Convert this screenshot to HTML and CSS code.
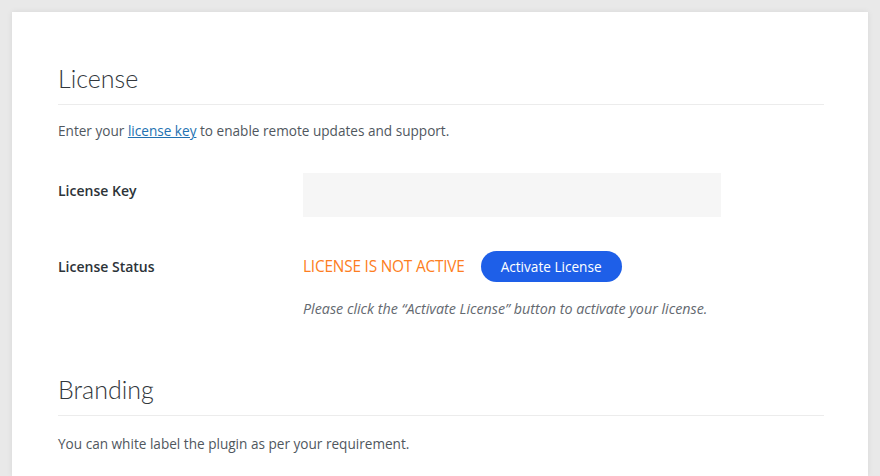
FILE: index.html
```html
<!DOCTYPE html>
<html>
<head>
<meta charset="utf-8">
<link rel="stylesheet" href="styles.css">
</head>
<body>
<div class="card">
  <section class="section">
    <h2 class="heading">License</h2>
    <p class="intro">Enter your <a href="#" class="link">license key</a> to enable remote updates and support.</p>
    <div class="row row-key">
      <div class="label">License Key</div>
      <div class="field"><div class="input"></div></div>
    </div>
    <div class="row row-status">
      <div class="label">License Status</div>
      <div class="field">
        <div class="status-line">
          <span class="status">LICENSE IS NOT ACTIVE</span>
          <button class="btn">Activate License</button>
        </div>
        <p class="help">Please click the “Activate License” button to activate your license.</p>
      </div>
    </div>
  </section>
  <section class="section branding">
    <h2 class="heading">Branding</h2>
    <p class="intro">You can white label the plugin as per your requirement.</p>
  </section>
</div>
</body>
</html>
```
FILE: styles.css
```css
html, body { margin: 0; padding: 0; }
body {
  background: #e9e9e9;
  font-family: "Open Sans", "Noto Sans", sans-serif;
  color: #3c434a;
  padding: 12px 12px 0 12px;
  height: 476px;
  box-sizing: border-box;
  overflow: hidden;
}
.card {
  background: #fff;
  height: 100%;
  padding: 52px 44px 0 46px;
  box-sizing: border-box;
  box-shadow: 0 0 6px rgba(0,0,0,0.08);
}
.heading {
  margin: 0;
  font-family: "Lato", "Open Sans", sans-serif;
  font-weight: 300;
  font-size: 25px;
  line-height: 28px;
  color: #32373c;
  padding-bottom: 12px;
  border-bottom: 1px solid #ececec;
}
.intro {
  margin: 16px 0 0 0;
  font-size: 13.6px;
  line-height: 20px;
  color: #50575e;
}
.link { color: #2271b1; text-decoration: underline; }
.row { display: flex; }
.label {
  width: 245px;
  flex: none;
  font-size: 14px;
  line-height: 20px;
  font-weight: 600;
  color: #2c3338;
}
.row-key { margin-top: 32px; align-items: flex-start; }
.row-key .label { padding-top: 8px; }
.input {
  width: 418px;
  height: 44px;
  background: #f6f6f6;
}
.row-status { margin-top: 34px; }
.row-status .label { line-height: 32px; }
.status-line { display: flex; align-items: center; gap: 16px; }
.status {
  color: #fd7e22;
  font-size: 15.4px;
  letter-spacing: -0.2px;
}
.btn {
  background: #1e5fe8;
  color: #fff;
  border: 0;
  border-radius: 16px;
  height: 31px;
  padding: 0 20px;
  font-family: inherit;
  font-size: 13.6px;
}
.help {
  margin: 17px 0 0 0;
  font-style: italic;
  font-size: 14.3px;
  line-height: 20px;
  color: #646970;
}
.branding { margin-top: 56px; }
.branding .intro { margin-top: 18px; }
```
